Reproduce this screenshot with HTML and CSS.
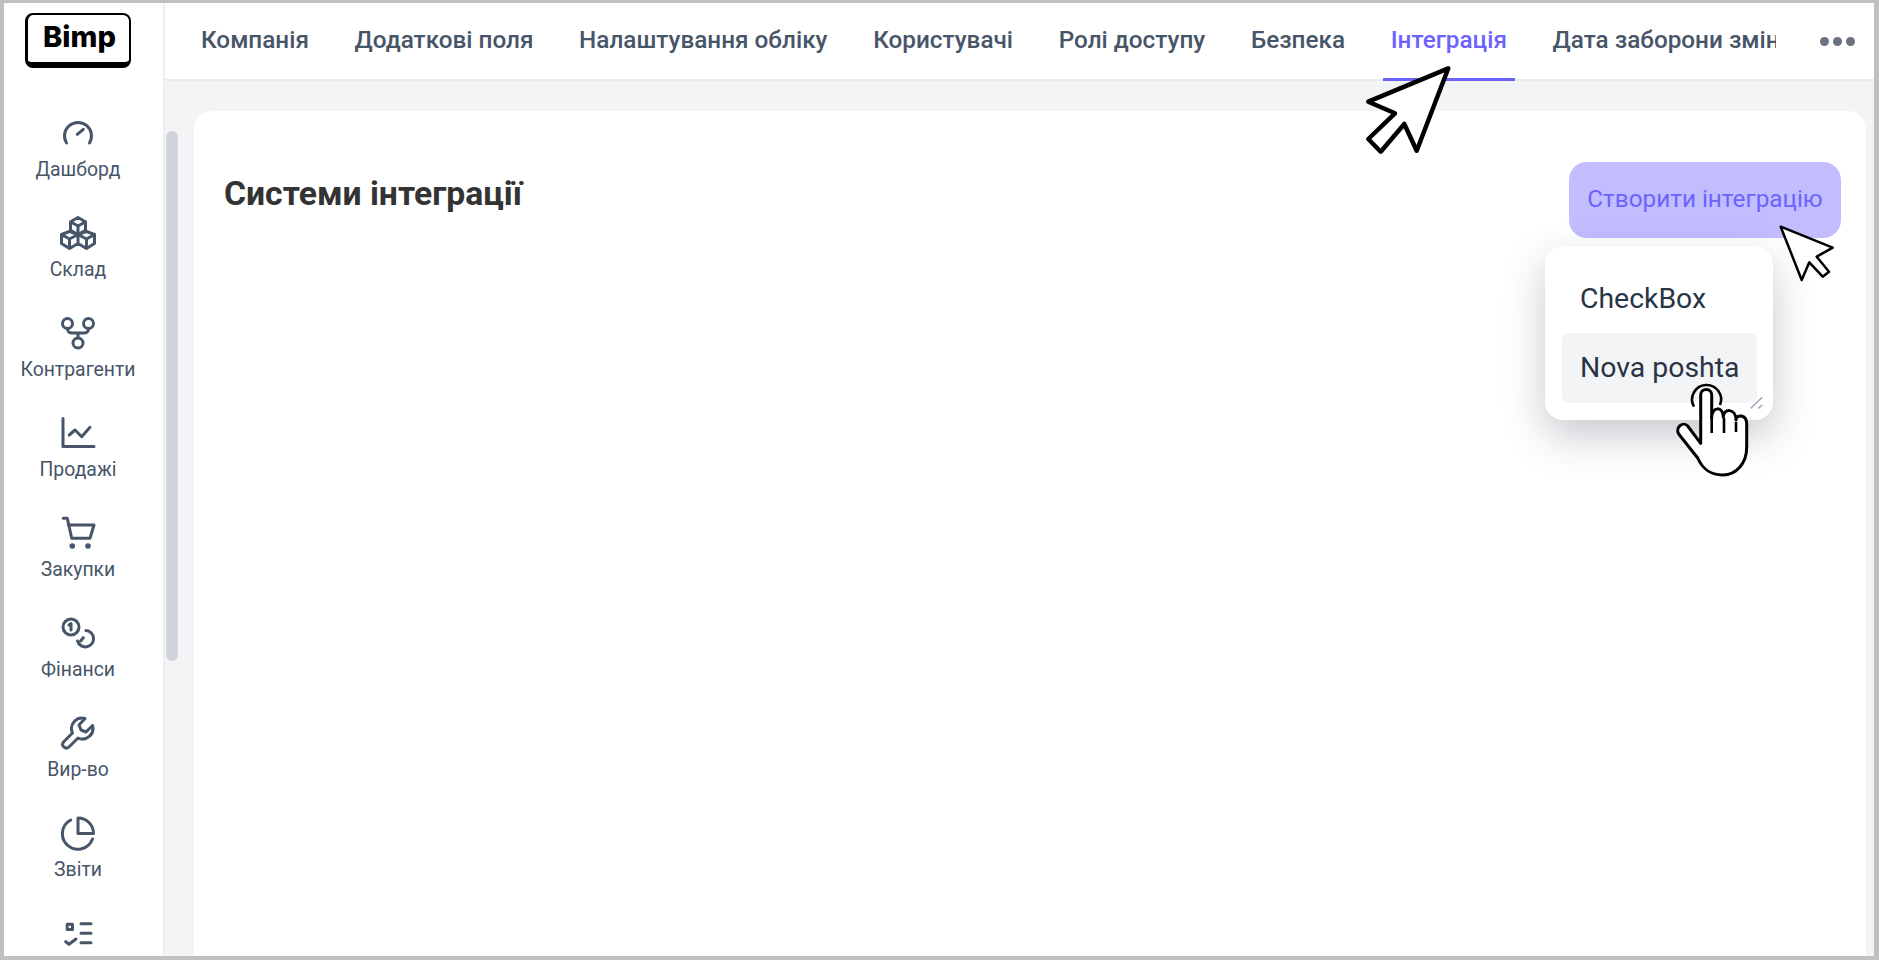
FILE: index.html
```html
<!DOCTYPE html>
<html>
<head>
  <meta charset="UTF-8">
  <title>Bimp</title>
  <link rel="stylesheet" href="styles.css">
</head>
<body>
<div class="frame">
  <div class="sidenav">
    <div class="logo-box"><div class="logo">Bimp</div></div>
    <div class="menu">
      <div class="menu-item">
        <svg viewBox="0 0 36 36" class="ico"><path d="M6.500 28A13.500 13.500 0 1 1 29.500 28M17.300 19.300l6-5"/></svg>
        <span>Дашборд</span>
      </div>
      <div class="menu-item">
        <svg viewBox="0 0 36 36" class="ico"><path d="M18 2.500l7.500 4.200v8.600L18 19.500l-7.500-4.200V6.700zM10.500 6.700l7.500 4.300 7.500-4.300M18 11v8.500M9.500 16.500l8.500 3v9l-8.500 5-8-5v-9zM1.500 19.500l8 4.500 8.500-4.500M9.500 24v9.500M26.500 16.500l8 3v9l-8 5-8.500-5v-9zM18 19.500l8.500 4.500 8-4.500M26.500 24v9.500"/></svg>
        <span>Склад</span>
      </div>
      <div class="menu-item">
        <svg viewBox="0 0 36 36" class="ico"><circle cx="7.500" cy="8.500" r="5"/><circle cx="28.500" cy="8.500" r="5"/><circle cx="18" cy="28" r="5"/><path d="M7.500 13.500c0 4 2 4.500 5 4.500h11c3 0 5-.5 5-4.500M18 18v5"/></svg>
        <span>Контрагенти</span>
      </div>
      <div class="menu-item">
        <svg viewBox="0 0 36 36" class="ico"><path d="M3 3.500V31.500H34M9.300 20l5.700-5 6.700 6.700 8.300-9.400"/></svg>
        <span>Продажі</span>
      </div>
      <div class="menu-item">
        <svg viewBox="0 0 36 36" class="ico"><path d="M3.300 3.300H7.300L11.700 23.300H30L34 10H8.300"/><circle class="dot" cx="12.300" cy="31" r="2.800"/><circle class="dot" cx="28" cy="31" r="2.800"/></svg>
        <span>Закупки</span>
      </div>
      <div class="menu-item">
        <svg viewBox="0 0 36 36" class="ico"><circle cx="11" cy="12" r="8"/><path d="M9 10l2-1.500v6.500M26 15.500A8.200 8.200 0 1 1 17.500 26M20.700 26l2.600-3.300"/></svg>
        <span>Фінанси</span>
      </div>
      <div class="menu-item">
        <svg viewBox="0 0 36 36" class="ico"><path d="M25 3.500a10.500 10.500 0 0 0-12.500 14.500L3.500 27a3.700 3.700 0 0 0 5.200 5.200L18 23a10.500 10.500 0 0 0 14.500-12.500L26 17l-5-2-2-5z"/></svg>
        <span>Вир-во</span>
      </div>
      <div class="menu-item">
        <svg viewBox="0 0 36 36" class="ico"><path d="M10.700 5A15.500 15.500 0 1 0 32.500 24M18 3a15.500 15.500 0 0 1 15.500 15.500H18z"/></svg>
        <span>Звіти</span>
      </div>
      <div class="menu-item">
        <svg viewBox="0 0 36 36" class="ico"><path d="M7.200 9.200h5.300v5.300H7.200zM21 8.700h10M21 18.300h10M21 27.700h10M5.700 26.700L9 29.300 16 24"/></svg>
      </div>
    </div>
  </div>
  <div class="right">
    <div class="tabs">
      <div class="tab">Компанія</div>
      <div class="tab">Додаткові поля</div>
      <div class="tab">Налаштування обліку</div>
      <div class="tab">Користувачі</div>
      <div class="tab">Ролі доступу</div>
      <div class="tab">Безпека</div>
      <div class="tab active">Інтеграція</div>
      <div class="tab tab-cut">Дата заборони змін</div>
      <div class="dots"><i></i><i></i><i></i></div>
    </div>
    <div class="body">
      <div class="scroll"><div class="thumb"></div></div>
      <div class="card">
        <div class="card-head">
          <h1>Системи інтеграції</h1>
          <div class="btn">Створити інтеграцію</div>
        </div>
      </div>
    </div>
  </div>

  <div class="dropdown">
    <div class="dd-item first">CheckBox</div>
    <div class="dd-item hover">Nova poshta</div>
    <svg class="grip" viewBox="0 0 14 14"><path d="M.7 11.300L12.300.3M8.300 11.300L12.300 8"/></svg>
  </div>

  <svg class="cursor" viewBox="0 0 1879 960">
    <path class="fat" d="M1448.300 68.300L1368.300 101.700 1395 113.300 1368.300 139 1380.700 151.700 1404.300 124 1416.700 150.700z"/>
    <path class="thin" d="M1780.700 226.700L1832.700 247.700 1816.700 256.700 1829 271.700 1822.700 276.700 1809.300 262.300 1801.700 280z"/>
    <path class="hand" d="M1700.700 443.300V395c0-7.500 11-7.500 11 0v23c0-12 11.600-12 11.600-1 0-9 12.700-9 12.700 3 0-6 10.700-6 10.700 4v23c0 16-10 28-24 28-13 0-20-6-25-17l-19-24c-4-7 5-13 9-8z"/>
    <path class="line" d="M1711.700 415v18M1724 418v15M1736 422v10M1694 406.700A14.500 14.500 0 1 1 1720 405"/>
  </svg>
</div>
</body>
</html>
```

FILE: styles.css
```css
* {
  box-sizing: border-box;
}
body {
  margin: 0;
  background-color: #fff;
  font-family: Roboto, sans-serif;
  color: #475569;
}
.frame {
  position: relative;
  display: flex;
  width: 1879px;
  height: 960px;
  overflow: hidden;
  background-color: #fff;
  border: solid #c0c0c0;
  border-width: 3px 5px 4px 4px;
}

.sidenav {
  width: 161px;
  flex: none;
  border-right: 2px solid #eceef1;
}
.logo-box {
  height: 78px;
  padding: 10px 0 0 21px;
}
.logo {
  width: 106px;
  height: 55px;
  padding-left: 2px;
  border: 2px solid #000;
  border-bottom-width: 6px;
  border-left-width: 3px;
  border-radius: 8px;
  font: 800 29px/44px Inter, sans-serif;
  color: #000;
  text-align: center;
}
.menu {
  padding: 34px 11px 0 0;
}
.menu-item {
  display: flex;
  flex-direction: column;
  align-items: center;
  height: 100px;
  font-size: 19.400px;
  line-height: 24px;
  color: #475569;
}
.ico {
  width: 36px;
  height: 36px;
  flex: none;
  margin-bottom: 7px;
  fill: none;
  stroke: #475569;
  stroke-width: 3;
  stroke-linecap: round;
  stroke-linejoin: round;
}
.ico .dot {
  fill: #475569;
  stroke: none;
}

.right {
  flex: 1;
  display: flex;
  flex-direction: column;
  min-width: 0;
}
.tabs {
  height: 78px;
  flex: none;
  display: flex;
  padding-left: 28px;
  border-bottom: 2px solid #e9ebee;
  font-size: 24.300px;
  font-weight: 500;
}
.tab {
  height: 78px;
  padding: 23px 8px 0;
  margin-right: 29.700px;
  white-space: nowrap;
  line-height: 27px;
}
.tab.active {
  color: #6c63ff;
  border-bottom: 3px solid #6c63ff;
}
.tab-cut {
  width: 231px;
  overflow: hidden;
  padding-right: 0;
  margin-right: 0;
  flex: none;
}
.dots {
  display: flex;
  gap: 4px;
  padding: 34px 0 0 44px;
}
.dots i {
  width: 9px;
  height: 9px;
  border-radius: 50%;
  background-color: #6b7280;
}

.body {
  flex: 1;
  display: flex;
  background-color: #f3f4f6;
  padding: 30px 8px 0 1px;
}
.scroll {
  width: 12px;
  margin: 20px 16px 0 0;
}
.thumb {
  height: 530px;
  border-radius: 6px;
  background-color: #d1d5db;
}
.card {
  flex: 1;
  background-color: #fff;
  border-radius: 18px 18px 0 0;
  padding: 51px 25px 0 30px;
}
.card-head {
  display: flex;
  justify-content: space-between;
  align-items: flex-start;
}
h1 {
  margin: 14px 0 0;
  font-size: 33.700px;
  line-height: 36px;
  font-weight: 700;
  color: #333;
}
.btn {
  width: 272px;
  height: 76px;
  border-radius: 18px;
  background-color: #c1bdff;
  color: #6c63ff;
  font-size: 24.300px;
  line-height: 74px;
  text-align: center;
}

.dropdown {
  position: absolute;
  left: 1541px;
  top: 243px;
  width: 228px;
  height: 174px;
  padding: 17px 16px 0 17px;
  border-radius: 18px;
  background-color: #fff;
  box-shadow: 0 16px 40px rgba(30, 41, 59, 0.25);
  color: #273444;
  font-size: 28.400px;
}
.dd-item {
  height: 70px;
  padding: 0 18px;
  line-height: 70px;
  border-radius: 6px;
  white-space: nowrap;
}
.dd-item.first {
  line-height: 71px;
}
.dd-item.hover {
  background-color: #f3f4f6;
}
.grip {
  position: absolute;
  right: 9px;
  bottom: 9px;
  width: 14px;
  height: 14px;
  fill: none;
  stroke: #9ca3af;
  stroke-width: 1.500;
}

.cursor {
  position: absolute;
  left: -4px;
  top: -3px;
  width: 1879px;
  height: 960px;
  fill: #fff;
  stroke: #000;
  stroke-linejoin: round;
  pointer-events: none;
}
.cursor .fat {
  stroke-width: 4.500;
}
.cursor .thin {
  stroke-width: 2.500;
}
.cursor .hand {
  stroke-width: 3;
}
.cursor .line {
  fill: none;
  stroke-width: 2.600;
}
```
